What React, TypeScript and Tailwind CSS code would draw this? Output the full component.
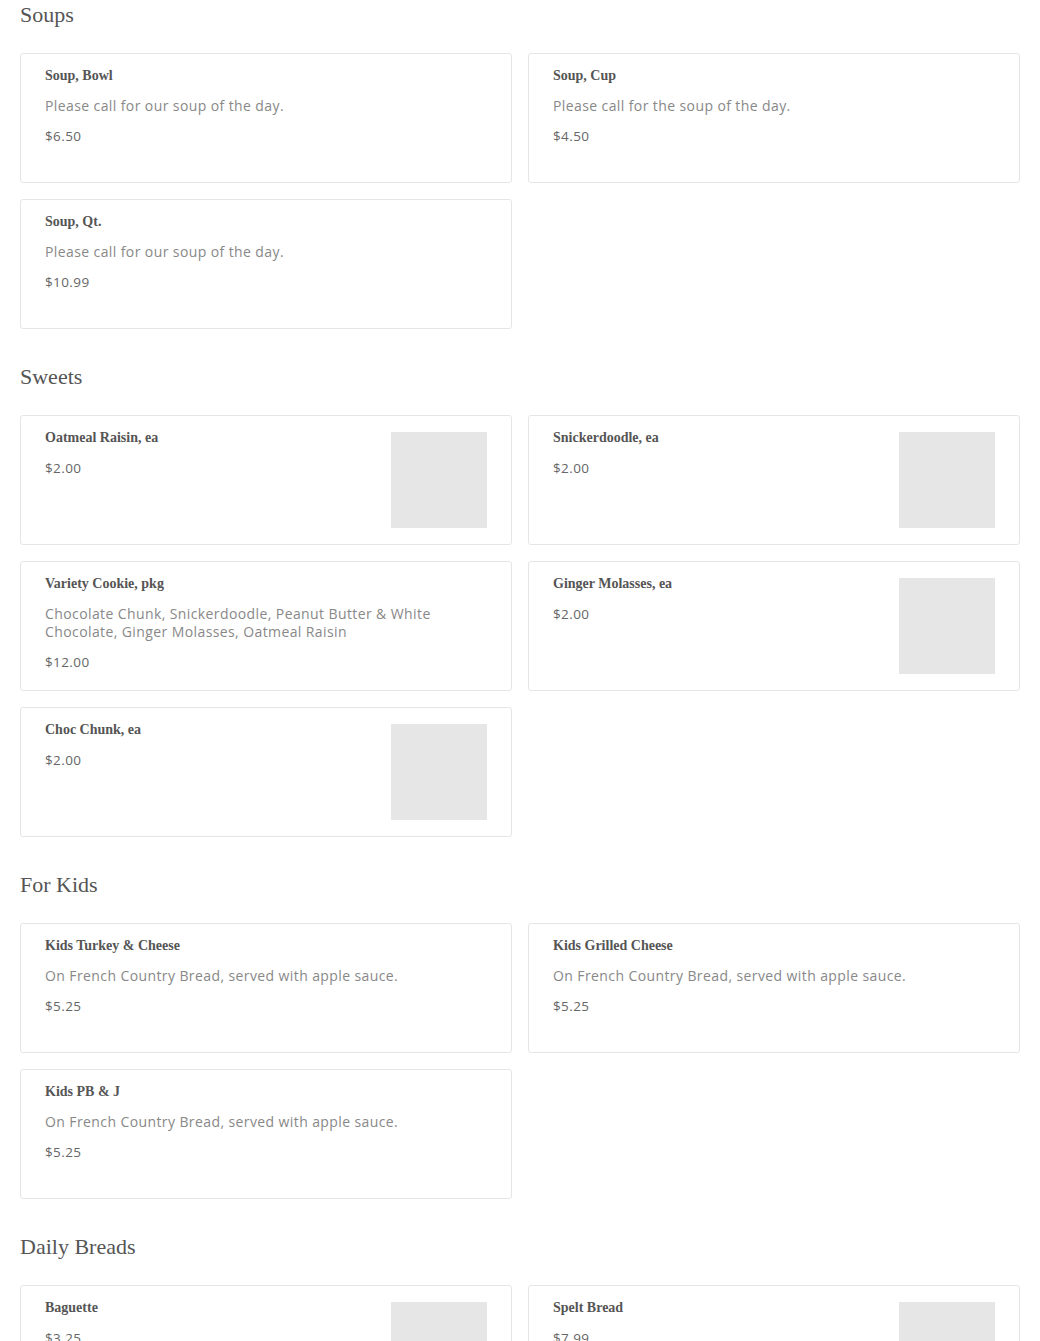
import React from 'react';

type Item = {
  name: string;
  description?: string;
  price: string;
  image?: boolean;
};

const sections: { title: string; items: Item[] }[] = [
  {
    title: 'Soups',
    items: [
      { name: 'Soup, Bowl', description: 'Please call for our soup of the day.', price: '$6.50' },
      { name: 'Soup, Cup', description: 'Please call for the soup of the day.', price: '$4.50' },
      { name: 'Soup, Qt.', description: 'Please call for our soup of the day.', price: '$10.99' },
    ],
  },
  {
    title: 'Sweets',
    items: [
      { name: 'Oatmeal Raisin, ea', price: '$2.00', image: true },
      { name: 'Snickerdoodle, ea', price: '$2.00', image: true },
      {
        name: 'Variety Cookie, pkg',
        description:
          'Chocolate Chunk, Snickerdoodle, Peanut Butter & White Chocolate, Ginger Molasses, Oatmeal Raisin',
        price: '$12.00',
      },
      { name: 'Ginger Molasses, ea', price: '$2.00', image: true },
      { name: 'Choc Chunk, ea', price: '$2.00', image: true },
    ],
  },
  {
    title: 'For Kids',
    items: [
      { name: 'Kids Turkey & Cheese', description: 'On French Country Bread, served with apple sauce.', price: '$5.25' },
      { name: 'Kids Grilled Cheese', description: 'On French Country Bread, served with apple sauce.', price: '$5.25' },
      { name: 'Kids PB & J', description: 'On French Country Bread, served with apple sauce.', price: '$5.25' },
    ],
  },
  {
    title: 'Daily Breads',
    items: [
      { name: 'Baguette', price: '$3.25', image: true },
      { name: 'Spelt Bread', price: '$7.99', image: true },
    ],
  },
];

const serif = { fontFamily: '"Liberation Serif", "DejaVu Serif", serif' };

const MenuCard: React.FC<{ item: Item }> = ({ item }) => (
  <div className="flex min-h-[130px] rounded-[3px] border border-[#e5e5e5] bg-white pl-6 pr-6">
    <div className="flex-1 pt-3 pb-4">
      <h3 className="text-[14px] font-bold leading-5 text-[#555]" style={serif}>
        {item.name}
      </h3>
      {item.description && (
        <p className="mt-[11px] pr-4 text-[14px] leading-[18px] tracking-[0.4px] text-[#888]">
          {item.description}
        </p>
      )}
      <p
        className={
          item.description
            ? 'mt-3 text-[13.5px] leading-[18px] tracking-[0.4px] text-[#666]'
            : 'mt-[11px] text-[13.5px] leading-[18px] tracking-[0.4px] text-[#666]'
        }
      >
        {item.price}
      </p>
    </div>
    {item.image && <div className="mt-4 h-24 w-24 shrink-0 bg-[#e6e6e6]" />}
  </div>
);

export default function App() {
  return (
    <div
      className="min-h-screen bg-white px-5"
      style={{ fontFamily: '"Open Sans", "Liberation Sans", sans-serif' }}
    >
      {sections.map((section) => (
        <section key={section.title} className="mb-[33px]">
          <h2 className="mb-[23px] text-[22px] leading-[30px] text-[#555]" style={serif}>
            {section.title}
          </h2>
          <div className="grid grid-cols-2 gap-4">
            {section.items.map((item) => (
              <MenuCard key={item.name} item={item} />
            ))}
          </div>
        </section>
      ))}
    </div>
  );
}
